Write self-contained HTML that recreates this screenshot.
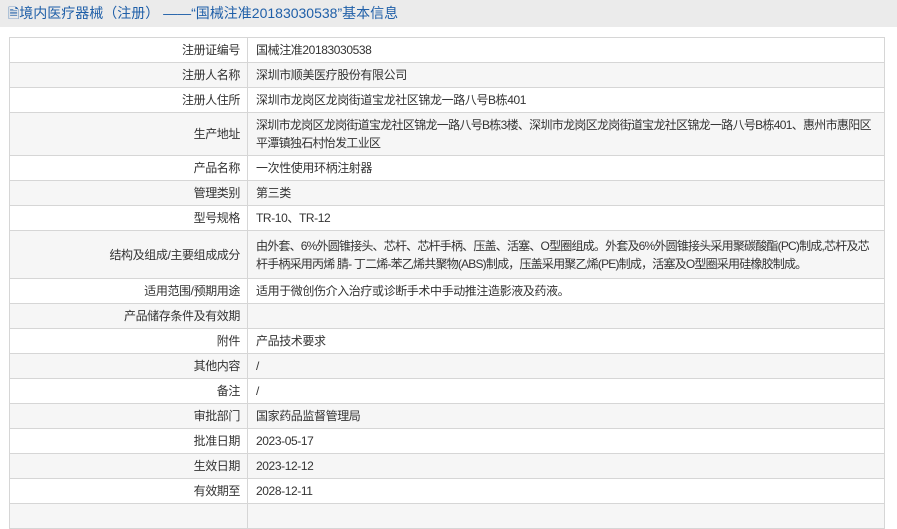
<!DOCTYPE html><html><head><meta charset="utf-8"><style>
body{margin:0;width:897px;height:514px;overflow:hidden;background:#fff;font-family:"Liberation Sans","Noto Sans CJK SC",sans-serif;}
.h{height:27px;background:#ebebeb;color:#1f5fa8;font-size:14px;line-height:27px;padding-left:8px;}
table{position:absolute;left:9px;top:37px;width:876px;border-collapse:collapse;font-size:12px;color:#333;letter-spacing:-0.4px;}
td{border:1px solid #d6d6d6;padding:0 8px;line-height:18px;height:24px;}
td.l{width:222px;text-align:right;padding-right:7px;}
tr:nth-child(even){background:#f6f6f6}
</style></head><body>
<div class="h">🗎境内医疗器械（注册） ——“国械注准20183030538”基本信息</div>
<table>
<tr><td class="l">注册证编号</td><td>国械注准20183030538</td></tr>
<tr><td class="l">注册人名称</td><td>深圳市顺美医疗股份有限公司</td></tr>
<tr><td class="l">注册人住所</td><td>深圳市龙岗区龙岗街道宝龙社区锦龙一路八号B栋401</td></tr>
<tr><td class="l" style="height:42px">生产地址</td><td style="letter-spacing:-0.7px">深圳市龙岗区龙岗街道宝龙社区锦龙一路八号B栋3楼、深圳市龙岗区龙岗街道宝龙社区锦龙一路八号B栋401、惠州市惠阳区平潭镇独石村怡发工业区</td></tr>
<tr><td class="l">产品名称</td><td>一次性使用环柄注射器</td></tr>
<tr><td class="l">管理类别</td><td>第三类</td></tr>
<tr><td class="l">型号规格</td><td>TR-10、TR-12</td></tr>
<tr><td class="l" style="height:47px">结构及组成/主要组成成分</td><td style="letter-spacing:-0.8px">由外套、6%外圆锥接头、芯杆、芯杆手柄、压盖、活塞、O型圈组成。外套及6%外圆锥接头采用聚碳酸酯(PC)制成,芯杆及芯杆手柄采用丙烯 腈- 丁二烯-苯乙烯共聚物(ABS)制成，压盖采用聚乙烯(PE)制成，活塞及O型圈采用硅橡胶制成。</td></tr>
<tr><td class="l">适用范围/预期用途</td><td>适用于微创伤介入治疗或诊断手术中手动推注造影液及药液。</td></tr>
<tr><td class="l">产品储存条件及有效期</td><td></td></tr>
<tr><td class="l">附件</td><td>产品技术要求</td></tr>
<tr><td class="l">其他内容</td><td>/</td></tr>
<tr><td class="l">备注</td><td>/</td></tr>
<tr><td class="l">审批部门</td><td>国家药品监督管理局</td></tr>
<tr><td class="l">批准日期</td><td>2023-05-17</td></tr>
<tr><td class="l">生效日期</td><td>2023-12-12</td></tr>
<tr><td class="l">有效期至</td><td>2028-12-11</td></tr>
<tr><td class="l"></td><td></td></tr>
</table>
</body></html>
